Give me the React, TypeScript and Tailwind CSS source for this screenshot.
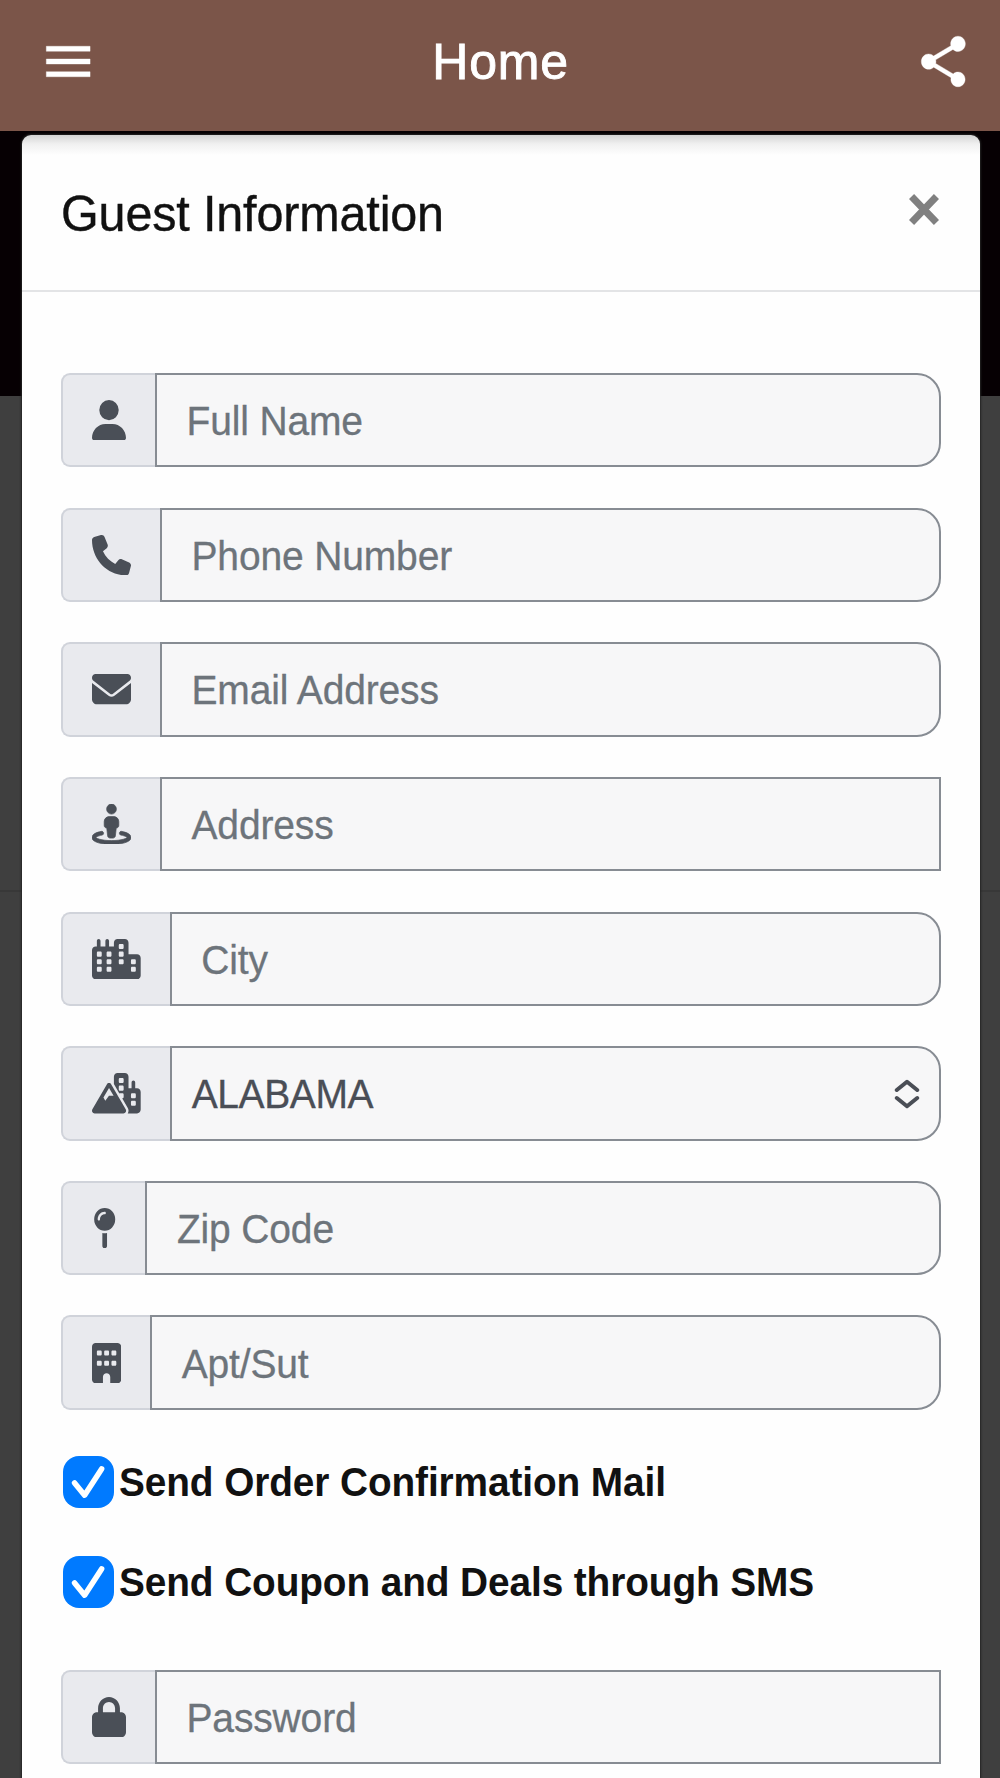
import React from 'react'
import type { IconType } from 'react-icons'
import {
  FaBuilding,
  FaCity,
  FaEnvelope,
  FaLock,
  FaMapPin,
  FaMountainCity,
  FaPhone,
  FaStreetView,
  FaUser,
} from 'react-icons/fa6'
import { IoMdMenu, IoMdShare } from 'react-icons/io'

interface FieldProps {
  icon: IconType
  iconClass: string
  label: string
  square?: boolean
  select?: boolean
}

const fields: FieldProps[] = [
  { icon: FaUser, iconClass: 'w-[34px]', label: 'Full Name' },
  { icon: FaPhone, iconClass: 'w-[39px]', label: 'Phone Number' },
  { icon: FaEnvelope, iconClass: 'w-[39px]', label: 'Email Address' },
  { icon: FaStreetView, iconClass: 'w-[39px] [stroke-width:9px]', label: 'Address', square: true },
  { icon: FaCity, iconClass: 'w-[48.7px]', label: 'City' },
  { icon: FaMountainCity, iconClass: 'w-[48.7px]', label: 'ALABAMA', select: true },
  { icon: FaMapPin, iconClass: 'ml-[1px] w-[23.4px]', label: 'Zip Code' },
  { icon: FaBuilding, iconClass: 'w-[29.2px]', label: 'Apt/Sut' },
]

function Field({ icon: Icon, iconClass, label, square, select }: FieldProps) {
  return (
    <div className="flex h-[94.5px] w-[880px]">
      <div className="flex shrink-0 items-center rounded-l-[9px] border-2 border-r-0 border-[#d0d3da] bg-[#e9eaee] px-[29px] text-[#4a4f57]">
        <Icon preserveAspectRatio="none" className={`h-[40.4px] ${iconClass}`} />
      </div>
      <div
        className={`flex flex-1 items-center justify-between border-2 border-[#878c93] bg-[#f7f7f8] text-[39px] leading-none ${
          square ? '' : 'rounded-r-[24px]'
        } ${select ? 'pr-[19px] pl-[20px] tracking-[-0.4px] text-[#4a4e56]' : 'pl-[29.5px] tracking-[-0.15px] text-[#6d747b]'}`}
      >
        <span className="mt-[1px] scale-y-[1.04] whitespace-nowrap [-webkit-text-stroke:0.3px_currentColor]">{label}</span>
        {select && (
          <svg viewBox="0 0 26 30" className="mt-px h-[30px] w-[26px]" fill="none" stroke="currentColor" strokeWidth="4" strokeLinecap="round" strokeLinejoin="round">
            <path d="M2.8 11 13 2.8 23.2 11M2.8 19 13 27.2 23.2 19" />
          </svg>
        )}
      </div>
    </div>
  )
}

function CheckRow({ label }: { label: string }) {
  return (
    <div className="flex h-[52px] items-center">
      <div className="h-[52px] w-[50.5px] shrink-0 rounded-[16px] bg-[#007aff]">
        <svg viewBox="0 0 51 52" className="h-full w-full" fill="none" stroke="#fff" strokeWidth="5.6" strokeLinecap="round" strokeLinejoin="round">
          <path d="M11.7 27 21.8 39.3 39 12.8" />
        </svg>
      </div>
      <span className="ml-[5.5px] scale-y-[1.04] whitespace-nowrap text-[38.8px] leading-none font-bold tracking-[-0.1px] text-[#111]">
        {label}
      </span>
    </div>
  )
}

export default function App() {
  return (
    <div className="flex h-[1778px] w-[1000px] flex-col overflow-hidden bg-[linear-gradient(#060003_396px,#3f3f3f_396px,#3f3f3f_890px,#383838_890px,#383838_892px,#3f3f3f_892px)] font-['Liberation_Sans',Arial,sans-serif]">
      <header className="flex h-[131px] shrink-0 items-start justify-between bg-[#7b5549] pr-[27px] pl-[38.5px] text-white">
        <IoMdMenu preserveAspectRatio="none" stroke="white" strokeWidth="3" className="mt-[31px] h-[61px] w-[58.4px]" />
        <h1 className="mt-[36.5px] ml-[-10px] text-[50px] leading-[50px] font-normal tracking-[0.8px] [-webkit-text-stroke:0.9px_white]">
          Home
        </h1>
        <IoMdShare preserveAspectRatio="none" stroke="white" strokeWidth="3" className="mt-[31px] h-[61px] w-[58.7px]" />
      </header>

      <main className="mt-[4px] ml-[22px] flex w-[957.5px] flex-1 flex-col rounded-t-[9px] bg-[linear-gradient(#d4d4d4,#f0f0f0_9px,#fefefe_20px)] shadow-[0_0_2px_1px_#242424]">
        <div className="flex h-[157px] shrink-0 items-start justify-between border-b-2 border-[#e3e4e6] pr-[41px] pl-[39px]">
          <h2 className="mt-[53px] scale-y-[1.03] text-[48.5px] leading-[50px] tracking-[-0.15px] text-[#111] [-webkit-text-stroke:0.4px_#111]">Guest Information</h2>
          <svg viewBox="0 0 30 31" className="mt-[59px] h-[31px] w-[30px]" stroke="#808080" strokeWidth="7.2">
            <path d="M2.5 2.5 27.5 28.5M27.5 2.5 2.5 28.5" />
          </svg>
        </div>

        <form className="flex flex-col pt-[80.9px] pl-[39px]">
          <div className="flex flex-col gap-[40.17px]">
            {fields.map((field) => (
              <Field key={field.label} {...field} />
            ))}
          </div>
          <div className="mt-[46px] ml-[2px] flex flex-col gap-[48px]">
            <CheckRow label="Send Order Confirmation Mail" />
            <CheckRow label="Send Coupon and Deals through SMS" />
          </div>
          <div className="mt-[62px]">
            <Field icon={FaLock} iconClass="w-[34px]" label="Password" square />
          </div>
        </form>
      </main>
    </div>
  )
}
